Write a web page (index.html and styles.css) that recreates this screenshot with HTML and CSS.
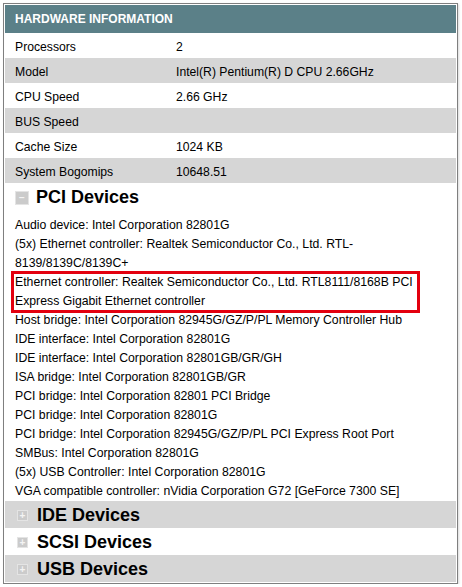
FILE: index.html
```html
<!DOCTYPE html>
<html lang="en">
<head>
    <meta charset="UTF-8">
    <title>Hardware Information</title>
    <link rel="stylesheet" href="styles.css">
</head>
<body>
    <div class="panel">
        <div class="panel-title">HARDWARE INFORMATION</div>

        <div class="info-row"><span class="label">Processors</span><span>2</span></div>
        <div class="info-row alt"><span class="label">Model</span><span>Intel(R) Pentium(R) D CPU 2.66GHz</span></div>
        <div class="info-row"><span class="label">CPU Speed</span><span>2.66 GHz</span></div>
        <div class="info-row alt"><span class="label">BUS Speed</span><span></span></div>
        <div class="info-row"><span class="label">Cache Size</span><span>1024 KB</span></div>
        <div class="info-row alt"><span class="label">System Bogomips</span><span>10648.51</span></div>

        <div class="section open">
            <span class="toggle">&minus;</span>PCI Devices
        </div>
        <ul class="devices">
            <li>Audio device: Intel Corporation 82801G</li>
            <li>(5x) Ethernet controller: Realtek Semiconductor Co., Ltd. RTL-8139/8139C/8139C+</li>
            <li class="marked">Ethernet controller: Realtek Semiconductor Co., Ltd. RTL8111/8168B PCI Express Gigabit Ethernet controller</li>
            <li>Host bridge: Intel Corporation 82945G/GZ/P/PL Memory Controller Hub</li>
            <li>IDE interface: Intel Corporation 82801G</li>
            <li>IDE interface: Intel Corporation 82801GB/GR/GH</li>
            <li>ISA bridge: Intel Corporation 82801GB/GR</li>
            <li>PCI bridge: Intel Corporation 82801 PCI Bridge</li>
            <li>PCI bridge: Intel Corporation 82801G</li>
            <li>PCI bridge: Intel Corporation 82945G/GZ/P/PL PCI Express Root Port</li>
            <li>SMBus: Intel Corporation 82801G</li>
            <li>(5x) USB Controller: Intel Corporation 82801G</li>
            <li>VGA compatible controller: nVidia Corporation G72 [GeForce 7300 SE]</li>
        </ul>

        <div class="section alt"><span class="toggle">+</span>IDE Devices</div>
        <div class="section"><span class="toggle">+</span>SCSI Devices</div>
        <div class="section alt"><span class="toggle">+</span>USB Devices</div>
    </div>
</body>
</html>
```

FILE: styles.css
```css
body {
    margin: 0;
    background: #fff;
    font-family: "Liberation Sans", Arial, sans-serif;
    font-size: 12px;
    color: #000;
}

.panel {
    margin: 3px 0 0 3px;
    width: 451px;
    padding: 1px;
    border: 1px solid #7f7f7f;
    box-shadow: 1px 1px 2px rgba(0, 0, 0, 0.15);
}

.panel-title {
    height: 28px;
    line-height: 28px;
    padding-left: 10px;
    background: #5b8088;
    color: #fff;
    font-weight: bold;
    font-size: 12px;
}

.info-row {
    display: flex;
    height: 25px;
    line-height: 28px;
    padding-left: 10px;
    font-size: 12.2px;
}

.info-row .label {
    width: 161px;
}

.alt {
    background: #d6d6d6;
}

.section {
    display: flex;
    align-items: center;
    box-sizing: border-box;
    height: 27px;
    padding: 2px 0 0 12px;
    font-size: 18px;
    font-weight: bold;
}

.section.open {
    height: 33px;
    padding: 0 0 4px 10px;
}

.toggle {
    display: inline-block;
    width: 9px;
    height: 9px;
    margin-right: 9px;
    background: #cbcbcb;
    border: 1px solid #e4e4e4;
    color: #f4f4f4;
    font-size: 10px;
    line-height: 9px;
    text-align: center;
}

.section.open .toggle {
    width: 12px;
    height: 12px;
    line-height: 12px;
    margin-right: 7px;
}

.devices {
    list-style: none;
    margin: 0;
    padding: 0 0 0 8px;
    width: 405px;
    font-size: 12.25px;
}

.devices li {
    line-height: 19px;
    padding-left: 2px;
}

.devices li.marked {
    outline: 3px solid #e3000f;
    outline-offset: -1px;
}
```
